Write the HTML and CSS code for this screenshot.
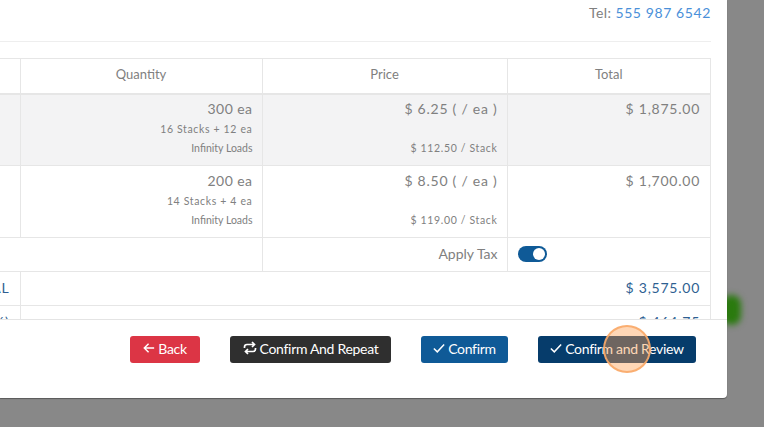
FILE: index.html
```html
<!DOCTYPE html>
<html lang="en">
<head>
<meta charset="utf-8">
<title>Confirm order</title>
<link rel="stylesheet" href="styles.css">
</head>
<body>
<div class="glow"></div>
<div class="modal">
  <div class="modal-body">
    <p class="tel">Tel: <a class="tel-link">555 987 6542</a></p>
    <hr class="rule">
    <table class="items">
      <colgroup>
        <col class="c-name"><col class="c-qty"><col class="c-price"><col class="c-total">
      </colgroup>
      <thead>
        <tr><th></th><th>Quantity</th><th>Price</th><th>Total</th></tr>
      </thead>
      <tbody>
        <tr class="item shaded">
          <td></td>
          <td><div class="main tight">300 ea</div><div class="sub num">16 Stacks + 12 ea</div><div class="sub">Infinity Loads</div></td>
          <td><div class="main">$ 6.25 ( / ea )</div><div class="sub num spaced">$ 112.50 / Stack</div></td>
          <td class="total"><div class="main">$ 1,875.00</div></td>
        </tr>
        <tr class="item">
          <td></td>
          <td><div class="main tight">200 ea</div><div class="sub num">14 Stacks + 4 ea</div><div class="sub">Infinity Loads</div></td>
          <td><div class="main">$ 8.50 ( / ea )</div><div class="sub num spaced">$ 119.00 / Stack</div></td>
          <td class="total"><div class="main">$ 1,700.00</div></td>
        </tr>
        <tr class="line">
          <td colspan="2"></td>
          <td class="tax-label">Apply Tax</td>
          <td class="toggle-cell"><span class="toggle"><span class="knob"></span></span></td>
        </tr>
        <tr class="line sum">
          <td class="sum-label">SUBTOTAL</td>
          <td colspan="3" class="total">$ 3,575.00</td>
        </tr>
        <tr class="line sum">
          <td class="sum-label">TAX (13%)</td>
          <td colspan="3" class="total">$ 464.75</td>
        </tr>
      </tbody>
    </table>
  </div>
  <div class="modal-footer">
    <button class="btn btn-red">
      <svg class="ico" viewBox="0 0 14 14"><path d="M13 7H1.500M6.500 2 1.500 7l5 5"/></svg><span>Back</span>
    </button>
    <button class="btn btn-dark">
      <svg class="ico ico-wide" viewBox="0 0 14 14"><path d="M1.500 7V6Q1.500 3.500 4 3.500H11.500M9 1l2.500 2.500L9 6M12.500 7V8Q12.500 10.500 10 10.500H2.500M5 8 2.500 10.500 5 13"/></svg><span>Confirm And Repeat</span>
    </button>
    <button class="btn btn-blue">
      <svg class="ico" viewBox="0 0 14 14"><path d="M1 7.500 5 11.500 13 3"/></svg><span>Confirm</span>
    </button>
    <button class="btn btn-navy">
      <svg class="ico" viewBox="0 0 14 14"><path d="M1 7.500 5 11.500 13 3"/></svg><span>Confirm and Review</span>
    </button>
  </div>
</div>
<div class="pointer"></div>
</body>
</html>
```

FILE: styles.css
```css
* { box-sizing: border-box; }
html, body { margin: 0; height: 100%; }
body {
  background: #888;
  overflow: hidden;
  font-family: Lato, "Liberation Sans", sans-serif;
  color: #808080;
}
.glow {
  position: absolute;
  left: 722px;
  top: 295px;
  width: 19px;
  height: 30px;
  border-radius: 9px;
  background: #2a7a0e;
  filter: blur(3px);
}
.modal {
  position: absolute;
  left: 0;
  top: 0;
  width: 727px;
  height: 398px;
  background: #fff;
  border-radius: 0 0 4px 0;
  box-shadow: 0 1px 1px rgba(0,0,0,.35);
  display: flex;
  flex-direction: column;
  overflow: hidden;
}
.modal-body {
  height: 319px;
  flex: none;
  overflow: hidden;
  padding-right: 16px;
}
.tel {
  margin: 0;
  height: 41px;
  padding-top: 4px;
  text-align: right;
  font-size: 14px;
  line-height: 17px;
  letter-spacing: .4px;
  color: #808080;
}
.tel-link { color: #4a90d9; letter-spacing: .6px; }
.rule {
  margin: 0 0 16px;
  border: 0;
  border-top: 1px solid #eee;
}
.items {
  border-collapse: collapse;
  table-layout: fixed;
  width: 811px;
  margin-left: -101px;
  font-size: 14px;
}
.c-name { width: 120.500px; }
.c-qty { width: 242px; }
.c-price { width: 245px; }
.c-total { width: 203.500px; }
.items th, .items td {
  border: 1px solid #e6e6e6;
  padding: 0 9px 0 10px;
}
.items th {
  height: 35px;
  padding: 0 10px 3px;
  border-bottom-width: 2px;
  font-weight: 400;
  font-size: 13px;
  color: #808080;
  text-align: center;
}
.items td {
  text-align: right;
  vertical-align: top;
}
.item td { height: 72px; padding-top: 6px; }
.shaded td { background: #f3f3f4; }
.item.shaded td { padding-top: 5px; }
.main {
  font-size: 14px;
  line-height: 17px;
  letter-spacing: .75px;
  margin-bottom: 3px;
  color: #808080;
}
.main.tight { letter-spacing: .45px; }
.sub {
  font-size: 10.500px;
  line-height: 19px;
  color: #808080;
}
.sub.num { letter-spacing: .65px; }
.sub.spaced { margin-top: 22px; }
.items td.total { padding-right: 10px; }
.line td {
  height: 34px;
  padding-bottom: 2px;
  vertical-align: middle;
}
.tax-label { color: #808080; }
.sum td {
  font-size: 14px;
  letter-spacing: .75px;
  color: #2e5f92;
}
.items td.sum-label { padding-right: 10px; }
.items td.toggle-cell { text-align: left; }
.toggle {
  display: flex;
  align-items: center;
  justify-content: flex-end;
  width: 29px;
  height: 16px;
  margin-top: 1px;
  padding-right: 2px;
  border-radius: 8px;
  background: #0f5a97;
}
.knob {
  width: 12px;
  height: 12px;
  border-radius: 50%;
  background: #fff;
}
.modal-footer {
  flex: 1;
  border-top: 1px solid #e4e4e4;
  display: flex;
  justify-content: flex-end;
  align-items: flex-start;
  gap: 30px;
  padding: 16px 31px 0 0;
}
.btn {
  height: 27px;
  border: 0;
  border-radius: 3px;
  padding: 0 0 3px;
  color: #fff;
  font-family: Lato, "Liberation Sans", sans-serif;
  font-size: 14px;
  letter-spacing: -.3px;
  display: flex;
  align-items: center;
  justify-content: center;
  gap: 3px;
}
.btn-red { width: 70px; background: #dc3545; }
.btn-dark { width: 161px; background: #2f2f2f; }
.btn-blue { width: 87px; background: #0f5a97; }
.btn-navy { width: 158px; background: #063c6b; }
.ico {
  width: 12px;
  height: 12px;
  fill: none;
  stroke: #fff;
  stroke-width: 1.700;
}
.ico-wide { width: 14px; height: 14px; }
.pointer {
  position: absolute;
  left: 603px;
  top: 325px;
  width: 48px;
  height: 48px;
  border-radius: 50%;
  background: rgba(255,160,80,.42);
  border: 2px solid rgba(250,170,105,.9);
}
```
